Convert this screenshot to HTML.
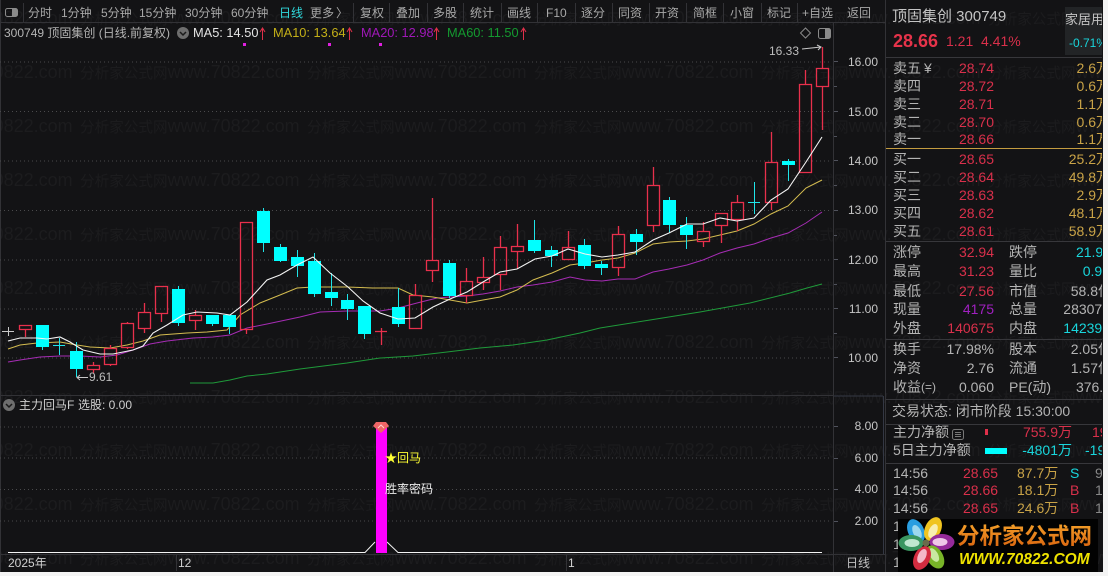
<!DOCTYPE html>
<html><head><meta charset="utf-8">
<style>
html,body{margin:0;padding:0;width:1108px;height:576px;overflow:hidden;background:#f4f4f4}
#r{position:absolute;left:0;top:0;width:1103px;height:572px;background:#131315;overflow:hidden;font-family:"Liberation Sans","Noto Sans CJK SC",sans-serif}
.w{position:absolute;left:-147px;white-space:nowrap;height:24px;line-height:24px;font-size:14.6px;color:#1c1c1e}
.w i{display:inline-block;width:227px;font-style:normal}
.w b{font-weight:normal;font-size:18px}
svg{position:absolute;left:0;top:0}
text{font-family:"Liberation Sans","Noto Sans CJK SC",sans-serif;font-size:12px;fill:#b4b4b4}
.tb text{fill:#a8a8a8}
.ax text{fill:#c6c6c6;text-anchor:end}
.p text{font-size:14px;fill:#b4b4b4}
.e{text-anchor:end}
.red{fill:#d9304b !important}
.gold{fill:#c9a347 !important}
.cy{fill:#19d6dc !important}
#u{position:absolute;left:959px;top:551px;height:18px;line-height:18px;white-space:nowrap;font-family:"Liberation Sans",sans-serif;font-size:15.5px;font-weight:bold;font-style:italic;color:#eee200}
</style></head><body>
<div id="r">
<div class="w" style="top:6px"><i>分析家公式网<b>www.70822.com</b></i><i>分析家公式网<b>www.70822.com</b></i><i>分析家公式网<b>www.70822.com</b></i><i>分析家公式网<b>www.70822.com</b></i><i>分析家公式网<b>www.70822.com</b></i><i>分析家公式网<b>www.70822.com</b></i></div>
<div class="w" style="top:60px"><i>分析家公式网<b>www.70822.com</b></i><i>分析家公式网<b>www.70822.com</b></i><i>分析家公式网<b>www.70822.com</b></i><i>分析家公式网<b>www.70822.com</b></i><i>分析家公式网<b>www.70822.com</b></i><i>分析家公式网<b>www.70822.com</b></i></div>
<div class="w" style="top:114px"><i>分析家公式网<b>www.70822.com</b></i><i>分析家公式网<b>www.70822.com</b></i><i>分析家公式网<b>www.70822.com</b></i><i>分析家公式网<b>www.70822.com</b></i><i>分析家公式网<b>www.70822.com</b></i><i>分析家公式网<b>www.70822.com</b></i></div>
<div class="w" style="top:168px"><i>分析家公式网<b>www.70822.com</b></i><i>分析家公式网<b>www.70822.com</b></i><i>分析家公式网<b>www.70822.com</b></i><i>分析家公式网<b>www.70822.com</b></i><i>分析家公式网<b>www.70822.com</b></i><i>分析家公式网<b>www.70822.com</b></i></div>
<div class="w" style="top:222px"><i>分析家公式网<b>www.70822.com</b></i><i>分析家公式网<b>www.70822.com</b></i><i>分析家公式网<b>www.70822.com</b></i><i>分析家公式网<b>www.70822.com</b></i><i>分析家公式网<b>www.70822.com</b></i><i>分析家公式网<b>www.70822.com</b></i></div>
<div class="w" style="top:276px"><i>分析家公式网<b>www.70822.com</b></i><i>分析家公式网<b>www.70822.com</b></i><i>分析家公式网<b>www.70822.com</b></i><i>分析家公式网<b>www.70822.com</b></i><i>分析家公式网<b>www.70822.com</b></i><i>分析家公式网<b>www.70822.com</b></i></div>
<div class="w" style="top:330px"><i>分析家公式网<b>www.70822.com</b></i><i>分析家公式网<b>www.70822.com</b></i><i>分析家公式网<b>www.70822.com</b></i><i>分析家公式网<b>www.70822.com</b></i><i>分析家公式网<b>www.70822.com</b></i><i>分析家公式网<b>www.70822.com</b></i></div>
<div class="w" style="top:385px"><i>分析家公式网<b>www.70822.com</b></i><i>分析家公式网<b>www.70822.com</b></i><i>分析家公式网<b>www.70822.com</b></i><i>分析家公式网<b>www.70822.com</b></i><i>分析家公式网<b>www.70822.com</b></i><i>分析家公式网<b>www.70822.com</b></i></div>
<div class="w" style="top:438px"><i>分析家公式网<b>www.70822.com</b></i><i>分析家公式网<b>www.70822.com</b></i><i>分析家公式网<b>www.70822.com</b></i><i>分析家公式网<b>www.70822.com</b></i><i>分析家公式网<b>www.70822.com</b></i><i>分析家公式网<b>www.70822.com</b></i></div>
<div class="w" style="top:492px"><i>分析家公式网<b>www.70822.com</b></i><i>分析家公式网<b>www.70822.com</b></i><i>分析家公式网<b>www.70822.com</b></i><i>分析家公式网<b>www.70822.com</b></i><i>分析家公式网<b>www.70822.com</b></i><i>分析家公式网<b>www.70822.com</b></i></div>
<div class="w" style="top:546px"><i>分析家公式网<b>www.70822.com</b></i><i>分析家公式网<b>www.70822.com</b></i><i>分析家公式网<b>www.70822.com</b></i><i>分析家公式网<b>www.70822.com</b></i><i>分析家公式网<b>www.70822.com</b></i><i>分析家公式网<b>www.70822.com</b></i></div>

<svg width="1103" height="572" viewBox="0 0 1103 572">
<defs>
<clipPath id="pc"><rect x="886" y="0" width="216" height="572"/></clipPath>
<linearGradient id="og" x1="0" y1="0" x2="0" y2="1"><stop offset="0" stop-color="#f4a02a"/><stop offset="1" stop-color="#d8620e"/></linearGradient>
</defs>
<!-- frame lines -->
<path d="M0 22.5H885M0 395.5H833M0 554.5H885M885.5 0V572M833.5 23V572M23.5 3V22M353.5 3V22M389.5 3V22M427.5 3V22M463.5 3V22M501.5 3V22M537.5 3V22M575.5 3V22M612.5 3V22M649.5 3V22M686.5 3V22M723.5 3V22M761.5 3V22M797.5 3V22M176.5 555V571M566.5 555V571M.5 0V572" stroke="#323236" fill="none"/>
<path d="M883.5 396V554M834 396H883" stroke="#343844" fill="none"/>
<!-- dotted -->
<path d="M0 62H832M0 111.500H832M0 161H832M0 210.500H832M0 260H832M0 309H832M0 358H832M0 427H832M0 458H832M0 489.500H832M0 521H832" stroke="#4a4a4c" stroke-dasharray="1 3" fill="none"/>
<!-- axis ticks -->
<path d="M834 61.500h4M834 86.500h3M834 111.500h4M834 136.500h3M834 160.500h4M834 185.500h3M834 210.500h4M834 235.500h3M834 259.500h4M834 284.500h3M834 308.500h4M834 333.500h3M834 357.500h4M834 426.500h4M834 458.500h4M834 489.500h4M834 521.500h4" stroke="#50525c" fill="none"/>
<!-- toolbar -->
<rect x="5.500" y="8.500" width="12" height="8" rx="2" fill="none" stroke="#8a8a8a"/><rect x="12" y="9" width="5" height="7" fill="#8a8a8a"/>
<g class="tb">
<text x="28" y="17">分时</text><text x="61" y="17">1分钟</text><text x="101" y="17">5分钟</text><text x="139" y="17">15分钟</text><text x="185" y="17">30分钟</text><text x="231" y="17">60分钟</text>
<text x="279" y="17" style="fill:#30d8dc">日线</text><text x="310" y="17">更多</text><text x="336" y="17">〉</text>
<text x="360" y="17">复权</text><text x="396" y="17">叠加</text><text x="433" y="17">多股</text><text x="470" y="17">统计</text><text x="507" y="17">画线</text><text x="546" y="17">F10</text><text x="581" y="17">逐分</text><text x="618" y="17">同资</text><text x="655" y="17">开资</text><text x="693" y="17">简框</text><text x="730" y="17">小窗</text><text x="767" y="17">标记</text><text x="802" y="17">+自选</text><text x="847" y="17">返回</text>
</g>
<!-- header -->
<text x="4" y="37">300749 顶固集创 (日线.前复权)</text>
<circle cx="183" cy="33" r="6" fill="#6e6e6e"/><path d="M180 32l3 3 3-3" stroke="#1a1a1a" stroke-width="1.500" fill="none"/>
<text x="193" y="37" style="font-size:12.800px;fill:#e4e4e4">MA5: 14.50</text><text x="273" y="37" style="font-size:12.800px;fill:#c4b018">MA10: 13.64</text><text x="361" y="37" style="font-size:12.800px;fill:#a018b8">MA20: 12.98</text><text x="447" y="37" style="font-size:12.800px;fill:#149a30">MA60: 11.50</text>
<path d="M262.500 40V29M260 32l2.500-4 2.500 4M349.500 40V29M347 32l2.500-4 2.500 4M436.500 40V29M434 32l2.500-4 2.500 4M523.500 40V29M521 32l2.500-4 2.500 4" stroke="#e0304a" fill="none"/>
<rect x="243" y="43" width="3" height="3" fill="#e020e0"/><rect x="328" y="43" width="3" height="3" fill="#e020e0"/><rect x="379" y="43" width="3" height="3" fill="#e020e0"/>
<!-- top-right icons -->
<path d="M805.500 28l5 5-5 5-5-5z" fill="none" stroke="#8a8a8a"/>
<rect x="818.500" y="28.500" width="12" height="10" rx="2" fill="none" stroke="#8a8a8a"/><rect x="825" y="29" width="5" height="9" fill="#8a8a8a"/>
<!-- MA60 -->
<path d="M190 383L213 383 230 380 247 376 267 374 300 369 347 363 380 358 413 356 447 352 480 348 513 345 547 340 580 333 600 328 650 320 700 312 750 303 790 293 807 288 822 284" fill="none" stroke="#1f9a3a"/>
<!-- MA20 -->
<path d="M8 362L20 360 40 357 60 356 80 356 100 357 117 355 133 350 150 344 167 341 193 338 213 337 230 335 247 328 267 324 300 317 320 312 347 311 380 311 398 308 417 303 437 298 450 297 467 296 483 294 500 291 517 287 533 285 552 282 570 277 585 280 602 281 618 279 635 279 653 272 669 269 687 265 703 260 720 253 737 248 754 244 771 238 788 233 806 223 822 212" fill="none" stroke="#a62cb4"/>
<!-- MA10 -->
<path d="M8 349L20 345 37 343 60 342 77 345 90 347 110 348 127 345 143 341 160 335 187 333 207 332 227 330 240 315 260 303 280 295 297 288 313 287 347 287 373 288 398 288 413 295 433 297 450 300 467 303 483 300 500 297 517 290 533 280 552 273 570 265 585 263 602 260 618 258 635 253 653 244 669 242 687 241 703 239 720 235 737 231 754 224 771 214 788 206 806 188 822 180" fill="none" stroke="#d4bc50"/>
<!-- candles red -->
<path d="M19.500 325.500h12v4h-12zM25.500 329.500V337M87.500 365.500h12v4h-12zM93.500 362V365.500M93.500 369.500V373M104.500 348.500h12v16h-12zM110.500 345V348.500M110.500 364.500V366M121.500 323.500h12v24h-12zM127.500 322V323.500M127.500 347.500V349M138.500 312.500h12v16h-12zM144.500 303V312.500M144.500 328.500V333M155.500 286.500h12v27h-12zM161.500 313.500V322M189.500 315.500h12v5h-12zM195.500 310V315.500M195.500 320.500V330M240.500 222.500h12v107h-12zM246.500 329.500V334M409.500 295.500h12v33h-12zM415.500 284V295.500M426.500 260.500h12v10h-12zM432.500 198V260.500M432.500 270.500V282M460.500 281.500h12v14h-12zM466.500 268V281.500M466.500 295.500V303M477.500 277.500h12v5h-12zM483.500 257V277.500M483.500 282.500V290M494.500 247.500h12v27h-12zM500.500 236V247.500M500.500 274.500V290M511.500 246.500h12v5h-12zM517.500 224V246.500M517.500 251.500V269M562.500 247.500h12v12h-12zM568.500 231V247.500M612.500 234.500h12v33h-12zM618.500 226V234.500M618.500 267.500V276M647.500 185.500h12v40h-12zM653.500 167V185.500M653.500 225.500V232M697.500 231.500h12v10h-12zM703.500 222V231.500M703.500 241.500V247M715.500 213.500h12v12h-12zM721.500 225.500V243M731.500 202.500h12v17h-12zM737.500 195V202.500M737.500 219.500V231M765.500 162.500h12v40h-12zM771.500 132V162.500M771.500 202.500V210M799.500 84.500h12v88h-12zM805.500 70V84.500M816.500 68.500h12v18h-12zM822.500 47V68.500M822.500 86.500V130M375 331.500h12M381.500 328V345" fill="none" stroke="#e8304c" stroke-width="1.300"/>
<!-- candles cyan -->
<path d="M36 325h13v22h-13zM70 351h13v18h-13zM172 289h13v34h-13zM206 315h13v9h-13zM223 315h13v12h-13zM257 211h13v32h-13zM274 247h13v14h-13zM291 257h13v9h-13zM308 261h13v33h-13zM325 292h13v6h-13zM341 300h13v9h-13zM358 306h13v28h-13zM392 307h13v17h-13zM443 263h13v33h-13zM528 240h13v11h-13zM545 250h13v6h-13zM578 245h13v21h-13zM595 264h13v4h-13zM630 234h13v8h-13zM663 200h13v25h-13zM680 225h13v10h-13zM782 161h13v4h-13z" fill="#00ffff"/>
<path d="M42.500 347V350M76.500 342V351M76.500 369V377M178.500 286V289M178.500 323V326M212.500 324V326M229.500 327V334M263.500 208V211M263.500 243V252M280.500 244V247M280.500 261V262M297.500 250V257M297.500 266V277M314.500 253V261M314.500 294V297M331.500 273V292M331.500 298V306M347.500 294V300M347.500 309V320M364.500 334V339M398.500 288V307M398.500 324V327M449.500 260V263M449.500 296V298M534.500 220V240M534.500 251V253M551.500 246V250M551.500 256V267M584.500 239V245M584.500 266V269M601.500 261V264M601.500 268V275M636.500 229V234M636.500 242V255M669.500 197V200M669.500 225V233M686.500 217V225M686.500 235V249M788.500 159V161M788.500 165V181M53 345.500h12M59.500 338V355M748 202.500h12M754.500 182V214" fill="none" stroke="#1fe4e8"/>
<!-- MA5 -->
<path d="M8 341L20 338 37 338 47 339 60 337 70 342 83 350 100 354 113 354 133 350 143 346 153 333 167 325 183 315 197 312 217 313 230 315 247 302 267 280 280 275 297 265 313 257 330 273 348 287 363 301 380 313 398 319 415 318 433 307 450 299 467 292 483 282 500 272 517 269 535 259 552 256 568 249 585 254 602 257 618 255 635 252 653 240 669 233 687 224 703 224 720 218 737 221 754 218 771 200 788 189 806 162 822 137" fill="none" stroke="#f4f4f4" stroke-width="1.100"/>
<!-- cross at left -->
<path d="M2 331.500h12M8.500 327V336" stroke="#c8c8c8" fill="none"/>
<!-- annotations -->
<text x="769" y="55" style="fill:#bcbcbc">16.33</text><path d="M802 49L821 47M817 45l4 2-3 3" stroke="#c8c8c8" fill="none"/>
<text x="89" y="381" style="fill:#bcbcbc">9.61</text><path d="M88 377.500H77M80 375l-3 2.500 3 2.500" stroke="#c8c8c8" fill="none"/>
<!-- axis labels -->
<g class="ax">
<text x="878" y="66">16.00</text><text x="878" y="116">15.00</text><text x="878" y="165">14.00</text><text x="878" y="214">13.00</text><text x="878" y="264">12.00</text><text x="878" y="313">11.00</text><text x="878" y="362">10.00</text>
<text x="878" y="430">8.00</text><text x="878" y="462">6.00</text><text x="878" y="493">4.00</text><text x="878" y="525">2.00</text>
</g>
<!-- lower pane -->
<circle cx="9" cy="405" r="6" fill="#6e6e6e"/><path d="M6 404l3 3 3-3" stroke="#1a1a1a" stroke-width="1.500" fill="none"/>
<text x="19" y="409" style="fill:#cfcfcf">主力回马F</text><text x="78" y="409" style="fill:#cfcfcf">选股: 0.00</text>
<path d="M8 552.500H365L375 542M387 542L398 552.500H822" stroke="#f4f4f4" fill="none"/>
<rect x="376" y="428" width="11" height="125" fill="#ff00ff"/>
<path d="M376 422h10l3 4-8 7-8-7z" fill="#ee6666"/><path d="M378 428l3-3 3 3" stroke="#ffd0d0" fill="none"/>
<text x="385" y="462" style="fill:#ffff33">★回马</text>
<text x="385" y="493" style="fill:#ececec">胜率密码</text>
<text x="8" y="567" style="fill:#d0d0d0">2025年</text><text x="178" y="567" style="fill:#d0d0d0">12</text><text x="568" y="567" style="fill:#d0d0d0">1</text><text x="846" y="567" style="fill:#c0c0c0">日线</text>
<!-- right panel -->
<g class="p" clip-path="url(#pc)">
<rect x="1065" y="7" width="40" height="48" fill="#222426"/>
<text x="892" y="21" style="font-size:15px;fill:#c4c4c4">顶固集创 300749</text>
<text x="1065" y="24" style="font-size:13px;fill:#c4c4c4">家居用品</text>
<text x="1069" y="47" class="cy" style="font-size:12px">-0.71%</text>
<text x="893" y="47" class="red" style="font-size:18px;font-weight:bold;fill:#e6334a !important">28.66</text>
<text x="946" y="46" class="red">1.21</text><text x="981" y="46" class="red">4.41%</text>
<path d="M886 57.500H1102M886 241.500H1102M886 339.500H1102M886 399.500H1102M886 424.500H1102M886 463.500H1102" stroke="#37373b" fill="none"/>
<path d="M886 148.500H1102" stroke="#c49c40" fill="none"/>
<text x="893" y="73">卖五</text><text x="924" y="73">¥</text><text x="893" y="91">卖四</text><text x="893" y="109">卖三</text><text x="893" y="127">卖二</text><text x="893" y="144">卖一</text>
<text x="893" y="164">买一</text><text x="893" y="182">买二</text><text x="893" y="200">买三</text><text x="893" y="218">买四</text><text x="893" y="236">买五</text>
<g class="e">
<text x="994" y="73" class="red">28.74</text><text x="994" y="91" class="red">28.72</text><text x="994" y="109" class="red">28.71</text><text x="994" y="127" class="red">28.70</text><text x="994" y="144" class="red">28.66</text>
<text x="994" y="164" class="red">28.65</text><text x="994" y="182" class="red">28.64</text><text x="994" y="200" class="red">28.63</text><text x="994" y="218" class="red">28.62</text><text x="994" y="236" class="red">28.61</text>
<text x="1110" y="73" class="gold">2.6万</text><text x="1110" y="91" class="gold">0.6万</text><text x="1110" y="109" class="gold">1.1万</text><text x="1110" y="127" class="gold">0.6万</text><text x="1110" y="144" class="gold">1.1万</text>
<text x="1110" y="164" class="gold">25.2万</text><text x="1110" y="182" class="gold">49.8万</text><text x="1110" y="200" class="gold">2.9万</text><text x="1110" y="218" class="gold">48.1万</text><text x="1110" y="236" class="gold">58.9万</text>
</g>
<text x="893" y="257">涨停</text><text x="893" y="276">最高</text><text x="893" y="296">最低</text><text x="893" y="314">现量</text><text x="893" y="333">外盘</text>
<text x="893" y="354">换手</text><text x="893" y="373">净资</text><text x="893" y="392">收益</text><text x="921" y="391" style="font-size:12px">(=)</text>
<text x="1009" y="257">跌停</text><text x="1009" y="276">量比</text><text x="1009" y="296">市值</text><text x="1009" y="314">总量</text><text x="1009" y="333">内盘</text>
<text x="1009" y="354">股本</text><text x="1009" y="373">流通</text><text x="1009" y="392">PE(动)</text>
<g class="e">
<text x="994" y="257" class="red">32.94</text><text x="994" y="276" class="red">31.23</text><text x="994" y="296" class="red">27.56</text><text x="994" y="314" style="fill:#a020c0">4175</text><text x="994" y="333" class="red">140675</text>
<text x="994" y="354">17.98%</text><text x="994" y="373">2.76</text><text x="994" y="392">0.060</text>
<text x="1111" y="257" class="cy">21.97</text><text x="1110" y="276" class="cy">0.95</text><text x="1112" y="296">58.8亿</text><text x="1110" y="314">283072</text><text x="1110" y="333" class="cy">142397</text>
<text x="1112" y="354">2.05亿</text><text x="1112" y="373">1.57亿</text><text x="1111" y="392">376.5</text>
</g>
<text x="892" y="416">交易状态: 闭市阶段 15:30:00</text>
<text x="893" y="437">主力净额</text>
<rect x="952.500" y="429.500" width="11" height="10" rx="2" fill="none" stroke="#777"/><path d="M955 432.500h6M955 434.500h6M955 436.500h6" stroke="#777"/>
<rect x="985" y="429" width="3" height="6" fill="#e0304a"/>
<text x="1072" y="437" class="red e">755.9万</text><text x="1092" y="437" class="red">19</text>
<text x="893" y="455">5日主力净额</text>
<rect x="985" y="448" width="22" height="6" fill="#00ffff"/>
<text x="1072" y="455" class="cy e">-4801万</text><text x="1085" y="455" class="cy">-19</text>
<text x="893" y="478">14:56</text><text x="963" y="478" class="red">28.65</text><text x="1017" y="478" class="gold">87.7万</text><text x="1070" y="478" class="cy">S</text><text x="1095" y="478" style="fill:#888">9</text>
<text x="893" y="495">14:56</text><text x="963" y="495" class="red">28.66</text><text x="1017" y="495" class="gold">18.1万</text><text x="1070" y="495" class="red">B</text><text x="1095" y="495" style="fill:#888">1</text>
<text x="893" y="513">14:56</text><text x="963" y="513" class="red">28.65</text><text x="1017" y="513" class="gold">24.6万</text><text x="1070" y="513" class="red">B</text><text x="1095" y="513" style="fill:#888">1</text>
<text x="893" y="531">14</text><text x="893" y="549">14</text><text x="893" y="567">14</text>
</g>
<!-- logo -->
<rect x="898" y="519" width="200" height="53" fill="#020202"/>
<g>
<ellipse cx="916" cy="531" rx="8" ry="12.500" fill="#2a9ee0" transform="rotate(-25 916 531)"/><ellipse cx="917" cy="532" rx="4" ry="7.500" fill="#9cd8ee" transform="rotate(-25 917 532)"/>
<ellipse cx="933" cy="529" rx="8" ry="12.500" fill="#f0c420" transform="rotate(25 933 529)"/><ellipse cx="933" cy="531" rx="4" ry="7.500" fill="#f8eeb0" transform="rotate(25 933 531)"/>
<ellipse cx="942" cy="542" rx="12.500" ry="8" fill="#962a9a"/><ellipse cx="940" cy="542" rx="7.500" ry="4" fill="#f0c8e8"/>
<ellipse cx="935" cy="557" rx="8" ry="12.500" fill="#78b428" transform="rotate(-30 935 557)"/><ellipse cx="934" cy="555" rx="4" ry="7.500" fill="#c8e8a0" transform="rotate(-30 934 555)"/>
<ellipse cx="922" cy="558" rx="8" ry="12.500" fill="#d42c40" transform="rotate(25 922 558)"/><ellipse cx="922" cy="556" rx="4" ry="7.500" fill="#f4b8c8" transform="rotate(25 922 556)"/>
<ellipse cx="911" cy="543" rx="12.500" ry="8" fill="#3a9660"/><ellipse cx="912" cy="543" rx="7.500" ry="4" fill="#c0e8d0"/>
<circle cx="926" cy="543" r="3.500" fill="#6a6a4a"/>
</g>
<text x="957" y="544" style="font-size:22.500px;font-weight:bold;fill:url(#og)">分析家公式网</text>
</svg>
<div id="u">WWW.70822.COM</div>
</div>
</body></html>
